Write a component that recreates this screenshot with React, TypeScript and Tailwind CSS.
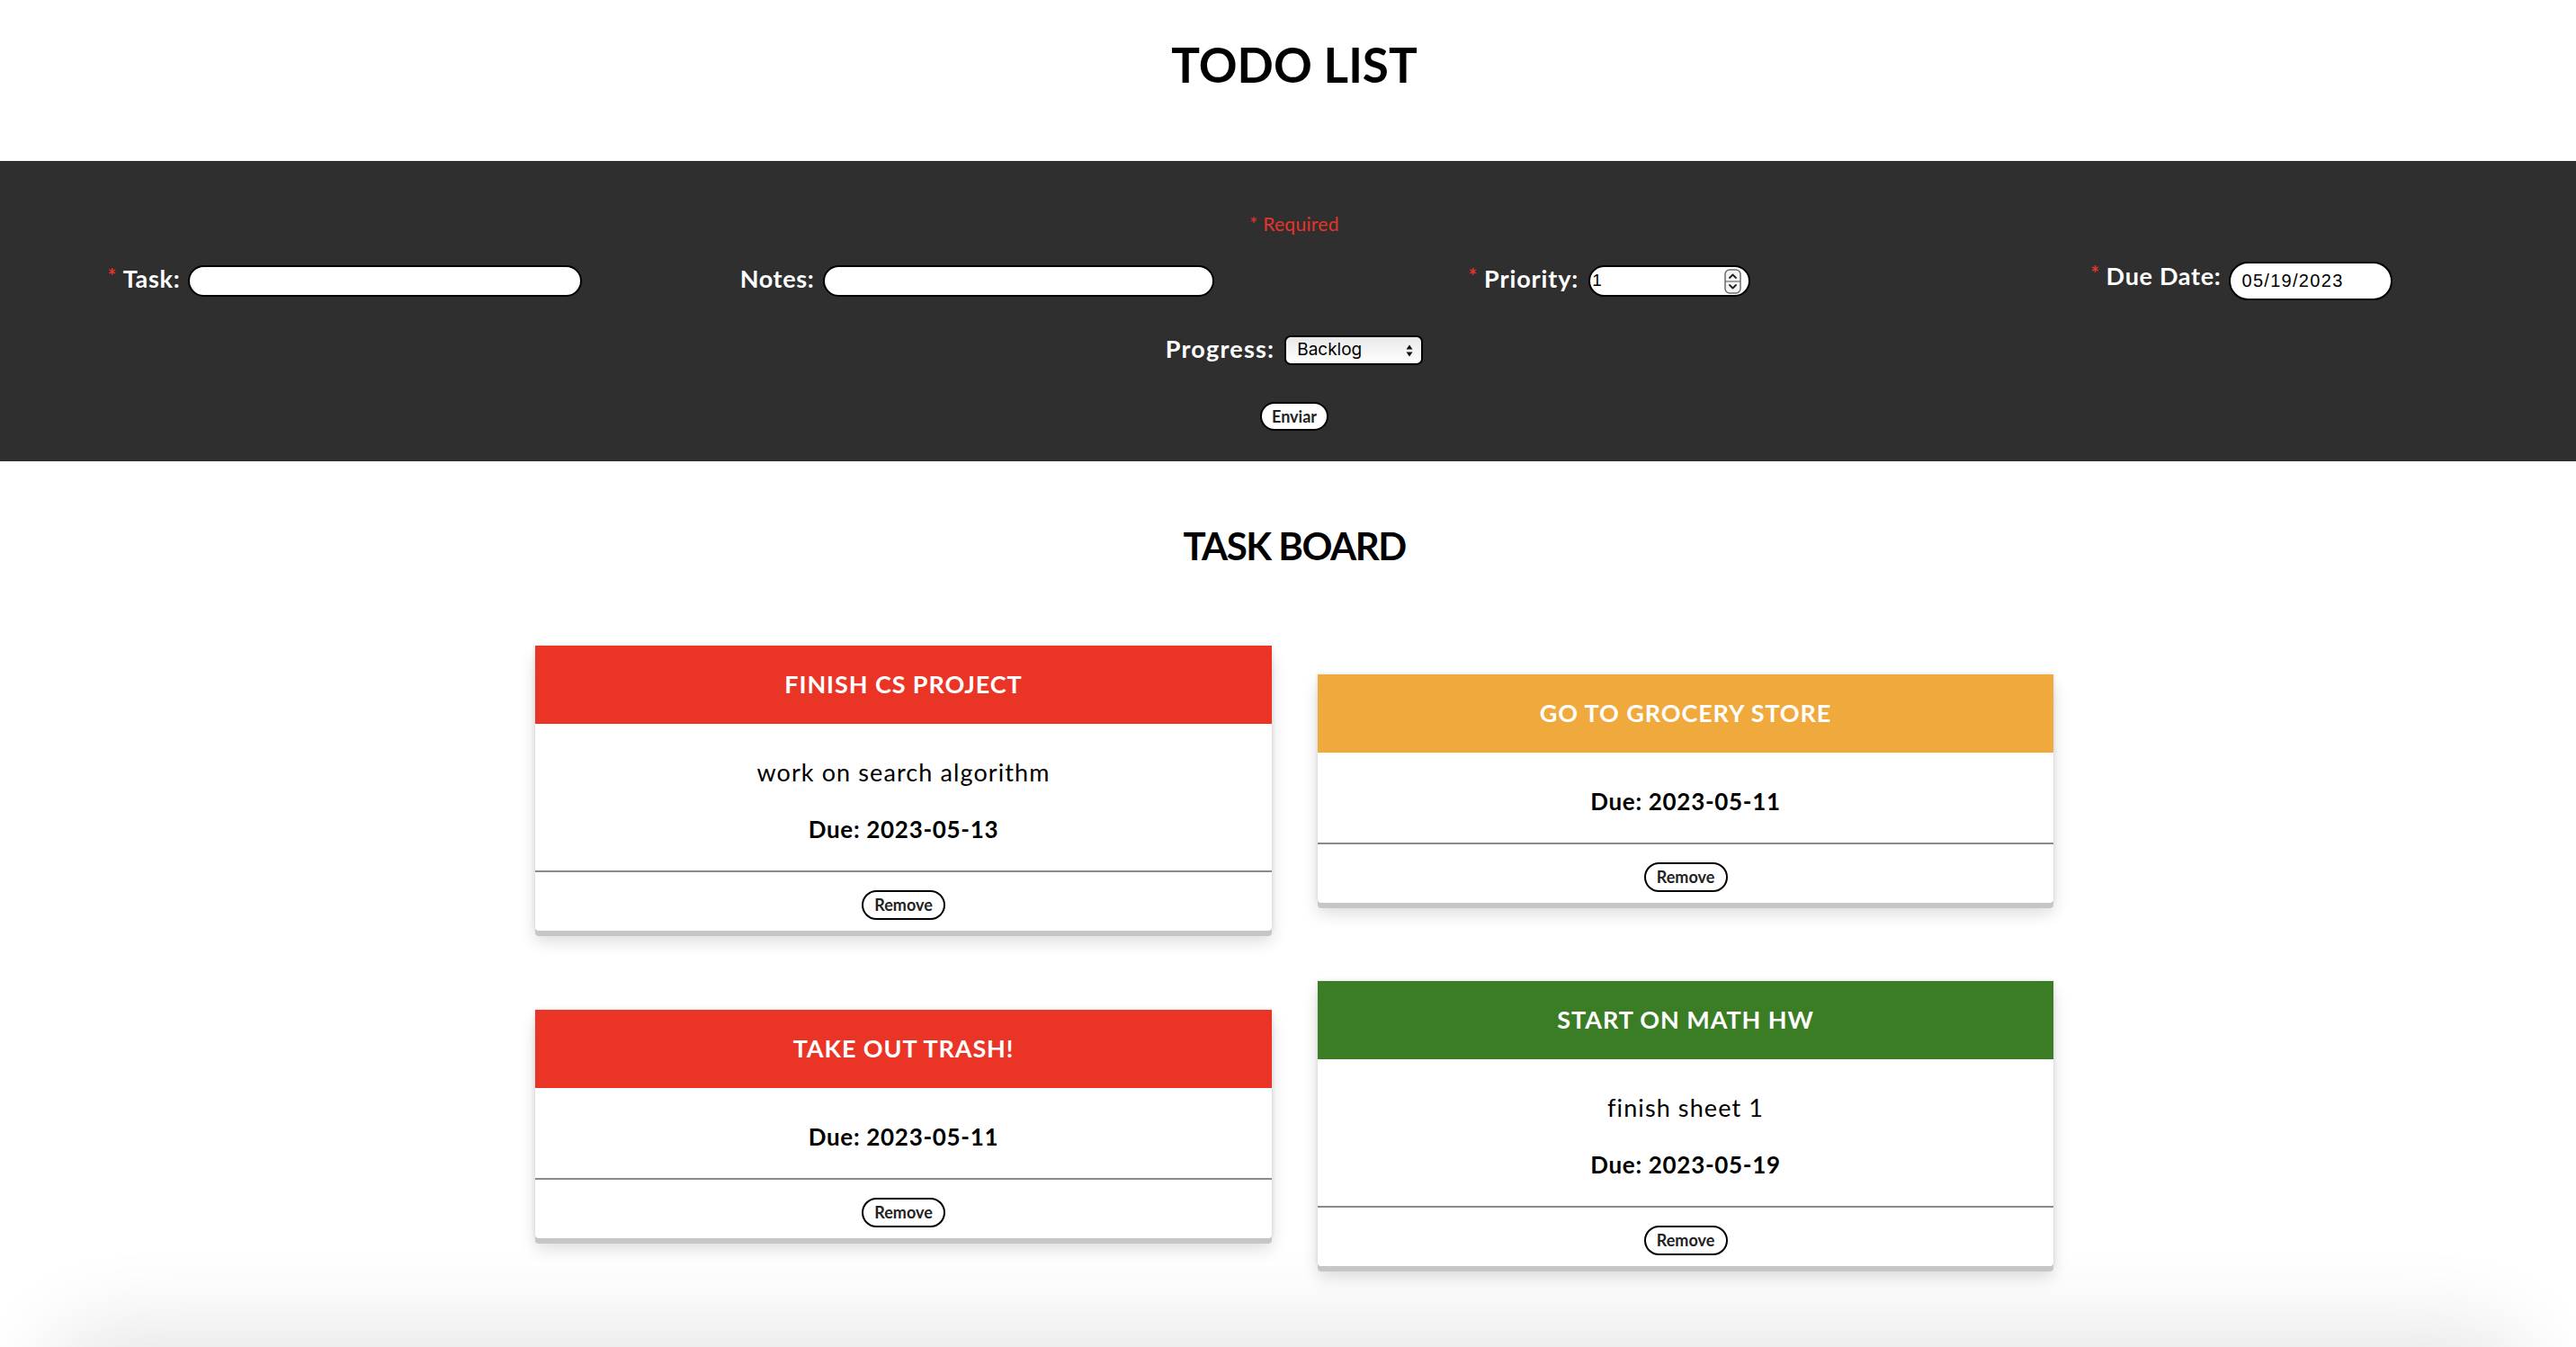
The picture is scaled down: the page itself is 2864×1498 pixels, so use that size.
import React from 'react'

const font = { fontFamily: 'Lato, "Noto Sans", sans-serif' }

type Task = {
  title: string
  notes?: string
  due: string
  color: string
}

const tasks: Task[] = [
  { title: 'FINISH CS PROJECT', notes: 'work on search algorithm', due: '2023-05-13', color: 'bg-[#e93426]' },
  { title: 'GO TO GROCERY STORE', due: '2023-05-11', color: 'bg-[#f0a93c]' },
  { title: 'TAKE OUT TRASH!', due: '2023-05-11', color: 'bg-[#e93426]' },
  { title: 'START ON MATH HW', notes: 'finish sheet 1', due: '2023-05-19', color: 'bg-[#3a7d24]' },
]

function Star() {
  return <span className="text-[#e5352a] text-[22px] leading-none align-[5px] mr-[7px]">*</span>
}

function TaskCard({ task }: { task: Task }) {
  return (
    <div className="bg-white rounded-b-[4px] shadow-[0_6px_0_#c6c6c6,0_0_5px_rgba(0,0,0,0.12),0_12px_18px_rgba(0,0,0,0.14)]">
      <div className={`${task.color} h-[87px] flex items-center justify-center`}>
        <h3 className="text-white text-[27px] font-bold tracking-[0.9px]">{task.title}</h3>
      </div>
      <div className="flex flex-col items-center gap-[31px] pt-[38px] pb-[30px]">
        {task.notes && <p className="text-[27px] leading-[32px] tracking-[1.1px] text-black">{task.notes}</p>}
        <p className="text-[26px] leading-[32px] tracking-[0.7px] font-bold text-black">Due: {task.due}</p>
      </div>
      <div className="border-t-2 border-[#8a8a8a] flex justify-center pt-[20px] pb-[12px]">
        <button className="h-[33px] w-[93px] rounded-full border-2 border-black bg-white text-[18px] font-bold text-[#222]">
          Remove
        </button>
      </div>
    </div>
  )
}

export default function App() {
  return (
    <div className="bg-white min-h-[1498px] overflow-hidden" style={font}>
      {/* Title */}
      <div className="h-[179px] pl-[14px] pt-[40px] text-center">
        <h1 className="text-[53px] leading-[64px] font-bold text-black">TODO LIST</h1>
      </div>

      {/* Form */}
      <form className="bg-[#2f2f2f] h-[334px] pt-[58px] flex flex-col">
        <p className="pl-[14px] text-center text-[21px] leading-[24px] tracking-[0.3px] text-[#e5352a]">* Required</p>

        <div className="grid grid-cols-4 pl-[32px] pr-[20px] mt-[30px] h-[43px] items-center">
          <div className="flex items-center justify-center">
            <label className="text-white text-[27px] leading-[28px] font-bold tracking-[0.7px] mr-[9px] mb-[5px]">
              <Star />Task:
            </label>
            <input className="w-[438px] h-[35px] rounded-full border-2 border-black bg-white outline-none px-3" />
          </div>
          <div className="flex items-center justify-center">
            <label className="text-white text-[27px] leading-[28px] font-bold tracking-[0.6px] mr-[10px] mb-[5px]">
              Notes:
            </label>
            <input className="w-[435px] h-[35px] rounded-full border-2 border-black bg-white outline-none px-3" />
          </div>
          <div className="flex items-center justify-center">
            <label className="text-white text-[27px] leading-[28px] font-bold tracking-[0.9px] mr-[11px] mb-[5px]">
              <Star />Priority:
            </label>
            <div className="w-[180px] h-[35px] rounded-full border-2 border-black bg-white flex items-center pl-[2px] pr-[8px]">
              <input
                readOnly
                value="1"
                className="flex-1 min-w-0 bg-transparent outline-none text-[19px] text-black"
                style={{ fontFamily: '"Liberation Sans", Arial, sans-serif' }}
              />
              <svg width="19" height="28" viewBox="0 0 19 28" fill="none">
                <rect x="1" y="1" width="17" height="26" rx="5" stroke="#6b6b6b" strokeWidth="1.5" fill="#f4f4f4" />
                <line x1="1" y1="14" x2="18" y2="14" stroke="#6b6b6b" strokeWidth="1.2" />
                <path d="M6 10 L9.5 6.5 L13 10" stroke="#222" strokeWidth="1.8" strokeLinecap="round" strokeLinejoin="round" />
                <path d="M6 18 L9.5 21.5 L13 18" stroke="#222" strokeWidth="1.8" strokeLinecap="round" strokeLinejoin="round" />
              </svg>
            </div>
          </div>
          <div className="flex items-center justify-center">
            <label className="text-white text-[27px] leading-[28px] font-bold tracking-[0.7px] mr-[9px] mb-[12px]">
              <Star />Due Date:
            </label>
            <input
              readOnly
              value="05/19/2023"
              className="w-[182px] h-[43px] rounded-full border-2 border-black bg-white outline-none pl-[12px] text-[20px] tracking-[1.3px] text-black"
              style={{ fontFamily: '"Liberation Sans", Arial, sans-serif' }}
            />
          </div>
        </div>

        <div className="pl-[14px] mt-[39px] flex items-center justify-center">
          <label className="text-white text-[27px] leading-[28px] font-bold tracking-[1.2px] mr-[11px] mb-[3px]">
            Progress:
          </label>
          <div className="w-[154px] h-[33px] rounded-[7px] border-2 border-black bg-gradient-to-b from-[#e9e9e9] to-white flex items-center pl-[12px] pr-[8px]">
            <select
              className="flex-1 appearance-none bg-transparent outline-none text-[19px] text-black"
              style={{ fontFamily: 'Inter, "Liberation Sans", sans-serif' }}
              defaultValue="Backlog"
            >
              <option>Backlog</option>
              <option>In Progress</option>
              <option>Done</option>
            </select>
            <svg width="10" height="16" viewBox="0 0 10 16">
              <path d="M1.5 6.5 L5 1.5 L8.5 6.5 Z" fill="#111" />
              <path d="M1.5 9.5 L5 14.5 L8.5 9.5 Z" fill="#111" />
            </svg>
          </div>
        </div>

        <div className="pl-[14px] mt-[41px] flex justify-center">
          <button
            type="button"
            className="w-[76px] h-[32px] rounded-full border-2 border-black bg-white text-[18px] font-bold text-[#222]"
          >
            Enviar
          </button>
        </div>
      </form>

      {/* Task board */}
      <h2 className="pl-[14px] mt-[69px] text-center text-[42px] leading-[50px] tracking-[-1.5px] font-bold text-black">
        TASK BOARD
      </h2>

      <div className="pl-[14px] mt-[86px] grid grid-cols-[819px_818px] justify-center items-center gap-x-[51px] gap-y-[56px]">
        {tasks.map((t) => (
          <TaskCard key={t.title} task={t} />
        ))}
      </div>

      <div className="mx-[70px] mt-[90px] h-[200px] rounded-[60px] bg-[#e6e6e6] shadow-[0_0_90px_30px_rgba(0,0,0,0.09)]" />
    </div>
  )
}
